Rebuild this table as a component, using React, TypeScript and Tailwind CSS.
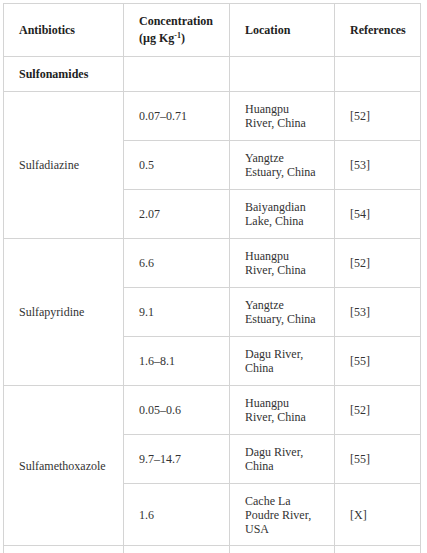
import React from 'react';

interface Entry {
  conc: string;
  location: string[];
  ref: string;
  tall?: boolean;
}

interface Group {
  name: string;
  entries: Entry[];
}

const groups: Group[] = [
  {
    name: 'Sulfadiazine',
    entries: [
      { conc: '0.07–0.71', location: ['Huangpu', 'River, China'], ref: '[52]' },
      { conc: '0.5', location: ['Yangtze', 'Estuary, China'], ref: '[53]' },
      { conc: '2.07', location: ['Baiyangdian', 'Lake, China'], ref: '[54]' },
    ],
  },
  {
    name: 'Sulfapyridine',
    entries: [
      { conc: '6.6', location: ['Huangpu', 'River, China'], ref: '[52]' },
      { conc: '9.1', location: ['Yangtze', 'Estuary, China'], ref: '[53]' },
      { conc: '1.6–8.1', location: ['Dagu River,', 'China'], ref: '[55]' },
    ],
  },
  {
    name: 'Sulfamethoxazole',
    entries: [
      { conc: '0.05–0.6', location: ['Huangpu', 'River, China'], ref: '[52]' },
      { conc: '9.7–14.7', location: ['Dagu River,', 'China'], ref: '[55]' },
      { conc: '1.6', location: ['Cache La', 'Poudre River,', 'USA'], ref: '[X]', tall: true },
    ],
  },
];

const cell = 'border border-[#d4d4d4] px-[15px] py-0 align-middle';

const App: React.FC = () => {
  return (
    <div className="bg-white min-h-screen pl-[3px] pt-[3px] font-[family-name:'Liberation_Serif','Times_New_Roman',serif] text-[12px] leading-[14px] text-[#333]">
      <table className="table-fixed border-collapse w-[417px]">
        <colgroup>
          <col className="w-[120px]" />
          <col className="w-[106px]" />
          <col className="w-[105px]" />
          <col className="w-[86px]" />
        </colgroup>
        <thead>
          <tr className="h-[53px] text-left font-bold text-[#222]">
            <th className={cell}>Antibiotics</th>
            <th className={cell}>
              <div className="leading-[17px]">Concentration</div>
              <div className="leading-[17px]">
                (µg Kg<sup className="text-[8px]">-1</sup>)
              </div>
            </th>
            <th className={cell}>Location</th>
            <th className={cell}>References</th>
          </tr>
        </thead>
        <tbody>
          <tr className="h-[35px]">
            <td className={`${cell} font-bold text-[#222]`}>Sulfonamides</td>
            <td className={cell}></td>
            <td className={cell}></td>
            <td className={cell}></td>
          </tr>
          {groups.map((g) =>
            g.entries.map((e, i) => (
              <tr key={g.name + i} className={e.tall ? 'h-[62px]' : 'h-[49px]'}>
                {i === 0 && (
                  <td className={cell} rowSpan={g.entries.length}>
                    {g.name}
                  </td>
                )}
                <td className={cell}>{e.conc}</td>
                <td className={cell}>
                  {e.location.map((l) => (
                    <div key={l}>{l}</div>
                  ))}
                </td>
                <td className={cell}>{e.ref}</td>
              </tr>
            ))
          )}
          <tr className="h-[49px]">
            <td className={cell}></td>
            <td className={cell}></td>
            <td className={cell}></td>
            <td className={cell}></td>
          </tr>
        </tbody>
      </table>
    </div>
  );
};

export default App;
